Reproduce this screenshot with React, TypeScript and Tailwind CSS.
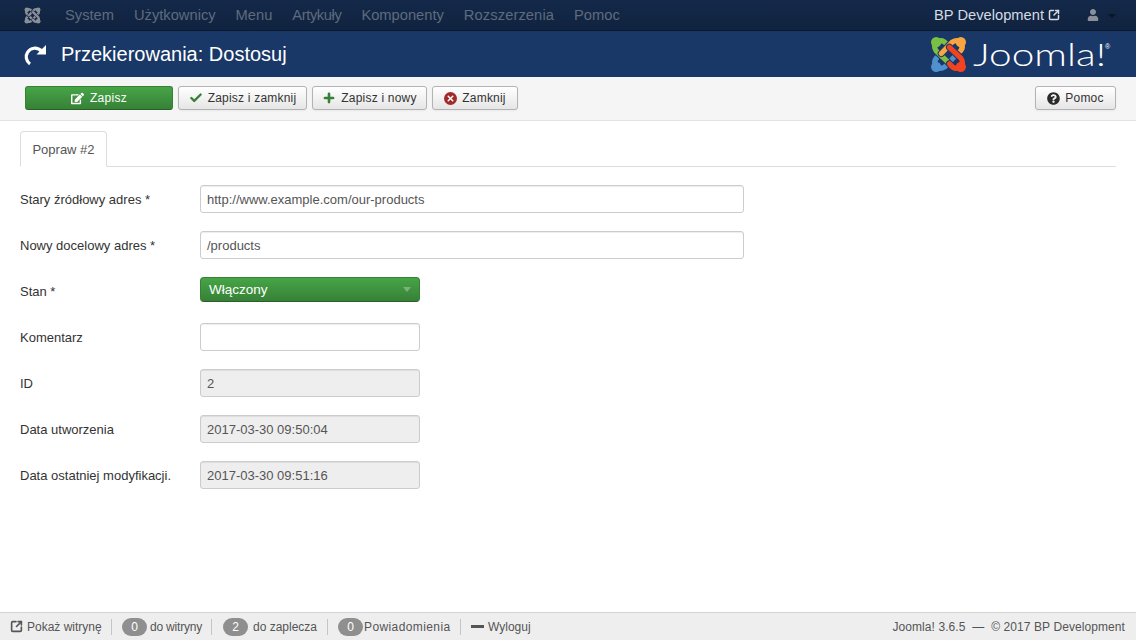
import React from 'react';
import { Check, Plus, X, SquareArrowOutUpRight } from 'lucide-react';
import { FaEdit, FaUser, FaQuestionCircle } from 'react-icons/fa';

const font = "[font-family:'Liberation_Sans',Arial,sans-serif]";

// one hook of the logo, the other three are the same path rotated
const hook = 'M17 9 Q12.5 2.5 7 5.5 Q2.5 9 6 14.5 L17 25';

const JoomlaMark: React.FC<{ size?: number; mono?: boolean }> = ({ size = 36, mono = false }) => {
  const colors = mono
    ? ['#8b8f96', '#8b8f96', '#8b8f96', '#8b8f96']
    : ['#5091cd', '#7ac143', '#f9a541', '#f44321'];
  const angles = [270, 0, 90, 180];
  const outline = mono ? '#12264a' : '#1a3867';
  return (
    <svg width={size} height={size} viewBox="0 0 36 36" fill="none" strokeLinecap="round">
      {angles.map((a, i) => (
        <g key={a} transform={`rotate(${a} 18 18)`}>
          <path d={hook} stroke={outline} strokeWidth="7" />
          <path d={hook} stroke={colors[i]} strokeWidth="5" />
          <circle cx="6" cy="6" r="5" fill={colors[i]} />
        </g>
      ))}
    </svg>
  );
};

const RedoIcon = () => (
  <svg width="24" height="24" viewBox="0 0 24 24" fill="none">
    <path d="M7 22 C3 19 2.2 14 4.5 10.5 C7.5 5.5 14 4.5 19 9.5" stroke="white" strokeWidth="3.2" />
    <path d="M23 3 V12.5 H13.5 Z" fill="white" />
  </svg>
);

const ToolbarButton: React.FC<{ icon: React.ReactNode; label: string; w: string }> = ({ icon, label, w }) => (
  <button className={`${w} h-[24px] flex items-center justify-center gap-[5px] rounded-[3px] border border-[#b3b3b3] bg-gradient-to-b from-white to-[#e6e6e6] text-[12px] tracking-[0.2px] text-[#333] shadow-[0_1px_2px_rgba(0,0,0,0.05)]`}>
    {icon}
    {label}
  </button>
);

const Row: React.FC<{ label: string; children: React.ReactNode }> = ({ label, children }) => (
  <div className="flex items-center h-[28px] mb-[18px]">
    <label className="w-[180px] pt-[2px] text-[13px] text-[#333]">{label}</label>
    {children}
  </div>
);

const inputCls = 'h-[28px] rounded-[3px] border border-[#ccc] px-[6px] pt-[1px] flex items-center text-[13px] text-[#555] shadow-[inset_0_1px_1px_rgba(0,0,0,0.075)]';

const Badge: React.FC<{ n: string }> = ({ n }) => (
  <span className="w-[25px] h-[18px] rounded-full bg-[#8f8f8f] text-white text-[12px] flex items-center justify-center">{n}</span>
);

const Sep: React.FC<{ ml: string }> = ({ ml }) => <span className={`${ml} w-px h-[16px] bg-[#c4c4c4]`} />;

export default function App() {
  const menu = [
    { label: 'System', cls: '' },
    { label: 'Użytkownicy', cls: '' },
    { label: 'Menu', cls: '' },
    { label: 'Artykuły', cls: 'tracking-[-0.4px]' },
    { label: 'Komponenty', cls: '' },
    { label: 'Rozszerzenia', cls: 'tracking-[0.1px]' },
    { label: 'Pomoc', cls: '' },
  ];
  return (
    <div className={`${font} w-[1136px] h-[640px] flex flex-col bg-white overflow-hidden`}>
      <nav className="h-[31px] shrink-0 flex items-center bg-gradient-to-b from-[#14284a] to-[#10233f] border-b border-[#0b1a30] pl-[24px] pr-[20px]">
        <JoomlaMark size={17} mono />
        <div className="flex items-center gap-[20px] ml-[24px] text-[14.7px] text-[#5e6b7e]">
          {menu.map((m) => (
            <span key={m.label} className={m.cls}>{m.label}</span>
          ))}
        </div>
        <div className="ml-auto flex items-center text-[14.7px] text-[#d5dae2]">
          <span>BP Development</span>
          <SquareArrowOutUpRight className="w-[12px] h-[12px] ml-[4px] text-[#d5dae2]" strokeWidth={3} />
          <FaUser className="w-[12px] h-[12px] ml-[27px] text-[#8a9099]" />
          <span className="ml-[9px] mt-[2px] w-0 h-0 border-x-[4px] border-x-transparent border-t-[4px] border-t-[#0a1626]" />
        </div>
      </nav>

      <header className="h-[46px] shrink-0 flex items-center bg-[#1a3867] pl-[23px] pr-[24px]">
        <RedoIcon />
        <h1 className="ml-[14px] text-[20px] text-white leading-none">Przekierowania: Dostosuj</h1>
        <div className="ml-auto flex items-center">
          <JoomlaMark size={37} />
          <div className="ml-[6px] w-[139px] flex items-start">
            <span className="w-[131px] text-[31px] leading-none text-white font-light whitespace-nowrap origin-left [transform:scaleX(1.31)] [font-family:Lato,sans-serif]">Joomla!</span>
            <span className="ml-[1px] mt-[4px] text-[7px] leading-none text-white">®</span>
          </div>
        </div>
      </header>

      <div className="h-[44px] shrink-0 flex items-start bg-[#f5f5f5] border-b border-[#e3e3e3] pt-[9px] pl-[25px] pr-[20px] gap-[5px]">
        <button className="w-[148px] h-[24px] flex items-center justify-center gap-[6px] rounded-[3px] border border-[#378137] border-b-[#2a5f2a] bg-gradient-to-b from-[#46a546] to-[#378137] text-[12px] tracking-[0.3px] text-white">
          <FaEdit className="w-[13px] h-[13px]" />
          Zapisz
        </button>
        <ToolbarButton w="w-[129px]" label="Zapisz i zamknij" icon={<Check className="w-[14px] h-[14px] text-[#378137]" strokeWidth={4} />} />
        <ToolbarButton w="w-[115px]" label="Zapisz i nowy" icon={<Plus className="w-[14px] h-[14px] text-[#378137]" strokeWidth={4.5} />} />
        <ToolbarButton
          w="w-[86px]"
          label="Zamknij"
          icon={
            <span className="w-[13px] h-[13px] rounded-full bg-[#a12b2b] flex items-center justify-center">
              <X className="w-[9px] h-[9px] text-white" strokeWidth={4} />
            </span>
          }
        />
        <div className="ml-auto">
          <ToolbarButton w="w-[81px]" label="Pomoc" icon={<FaQuestionCircle className="w-[13px] h-[13px] text-[#2b2b2b]" />} />
        </div>
      </div>

      <main className="flex-1 px-[20px] pt-[10px]">
        <div className="flex h-[36px] border-b border-[#ddd]">
          <div className="w-[87px] h-[36px] pt-[2px] flex items-center justify-center rounded-t-[4px] border border-[#ddd] border-b-white bg-white text-[13px] text-[#555]">
            Popraw #2
          </div>
        </div>
        <div className="pt-[18px]">
          <Row label="Stary źródłowy adres *">
            <div className={`${inputCls} w-[544px] bg-white`}>http://www.example.com/our-products</div>
          </Row>
          <Row label="Nowy docelowy adres *">
            <div className={`${inputCls} w-[544px] bg-white`}>/products</div>
          </Row>
          <Row label="Stan *">
            <div className="self-start w-[220px] h-[25px] rounded-[4px] border border-[#378137] border-b-[#2a5f2a] bg-gradient-to-b from-[#46a546] to-[#378137] text-white text-[13.5px] flex items-center pl-[8px] pr-[8px] pt-[2px]">
              Włączony
              <span className="ml-auto mb-[3px] w-0 h-0 border-x-[4px] border-x-transparent border-t-[5px] border-t-[#7fae7f]" />
            </div>
          </Row>
          <Row label="Komentarz">
            <div className={`${inputCls} w-[220px] bg-white`} />
          </Row>
          <Row label="ID">
            <div className={`${inputCls} w-[220px] bg-[#eee]`}>2</div>
          </Row>
          <Row label="Data utworzenia">
            <div className={`${inputCls} w-[220px] bg-[#eee]`}>2017-03-30 09:50:04</div>
          </Row>
          <Row label="Data ostatniej modyfikacji.">
            <div className={`${inputCls} w-[220px] bg-[#eee]`}>2017-03-30 09:51:16</div>
          </Row>
        </div>
      </main>

      <footer className="h-[28px] shrink-0 flex items-center bg-[#eeeeee] border-t border-[#d4d4d4] pl-[10px] pr-[11px] text-[12px] text-[#555]">
        <SquareArrowOutUpRight className="w-[13px] h-[13px] text-[#555]" strokeWidth={3} />
        <span className="ml-[4px] w-[74px] whitespace-nowrap">Pokaż witrynę</span>
        <Sep ml="ml-[10px]" />
        <span className="ml-[10px]"><Badge n="0" /></span>
        <span className="ml-[3px] w-[52px] whitespace-nowrap tracking-[-0.2px]">do witryny</span>
        <Sep ml="ml-[9px]" />
        <span className="ml-[11px]"><Badge n="2" /></span>
        <span className="ml-[5px] w-[64px] whitespace-nowrap">do zaplecza</span>
        <Sep ml="ml-[10px]" />
        <span className="ml-[10px]"><Badge n="0" /></span>
        <span className="ml-[1px] w-[86px] whitespace-nowrap tracking-[0.4px]">Powiadomienia</span>
        <Sep ml="ml-[10px]" />
        <span className="ml-[10px] w-[13px] h-[3px] bg-[#555]" />
        <span className="ml-[4px]">Wyloguj</span>
        <span className="ml-auto tracking-[0.08px]">Joomla! 3.6.5 &nbsp;— &nbsp;© 2017 BP Development</span>
      </footer>
    </div>
  );
}
